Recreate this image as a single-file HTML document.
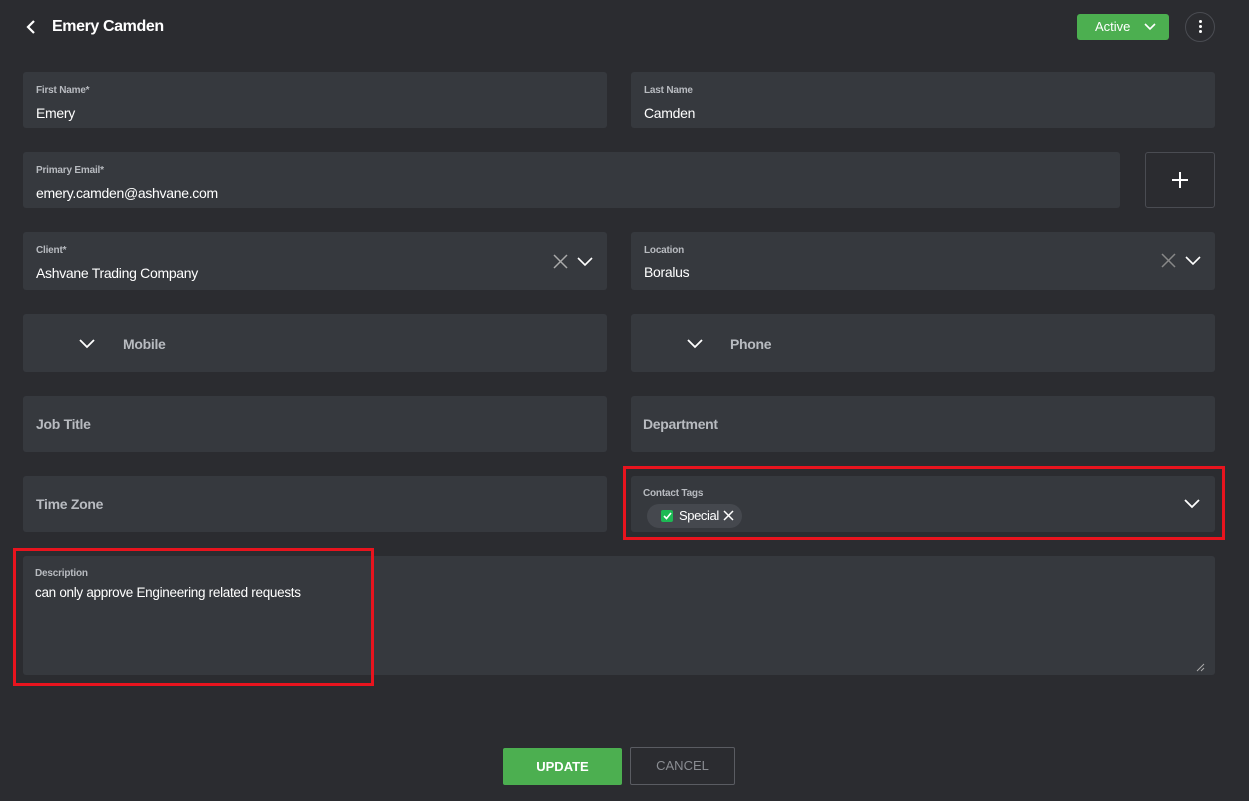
<!DOCTYPE html><html><head><style>
body{margin:0;width:1249px;height:801px;background:#2b2c30;font-family:"Liberation Sans",sans-serif;position:relative;overflow:hidden;color:#fff}
.f{position:absolute;background:#36393e;border-radius:3px}
.l{position:absolute;left:13px;top:13px;font-size:10px;color:#b8bbc0;font-weight:bold;letter-spacing:-0.2px}
.v{position:absolute;left:13px;top:33px;font-size:14px;color:#fff;letter-spacing:-0.3px}
.p{position:absolute;left:13px;font-size:14px;color:#b8bbc0;font-weight:bold;letter-spacing:-0.3px}
svg{position:absolute}
.red{position:absolute;border:3px solid #e8141e}
</style></head><body>
<svg style="left:24px;top:19px" width="14" height="16"><path d="M10 2 L4 8 L10 14" stroke="#fff" stroke-width="2.2" fill="none"/></svg>
<div style="position:absolute;left:52px;top:18px;font-size:16px;font-weight:bold;letter-spacing:-0.4px">Emery Camden</div>
<div style="position:absolute;left:1077px;top:14px;width:92px;height:26px;background:#4caf50;border-radius:3px;font-size:13px;line-height:26px"><span style="position:absolute;left:18px">Active</span><svg style="left:67px;top:9px" width="12" height="8"><path d="M1 1L6 6L11 1" stroke="#fff" stroke-width="1.6" fill="none"/></svg></div>
<div style="position:absolute;left:1185px;top:12px;width:28px;height:28px;border:1px solid #4a4c52;border-radius:50%"><div style="position:absolute;left:13px;top:7px;width:3px;height:3px;background:#fff;border-radius:2px;box-shadow:0 5px 0 #fff,0 10px 0 #fff"></div></div>

<div class="f" style="left:23px;top:72px;width:584px;height:56px"><div class="l">First Name*</div><div class="v">Emery</div></div>
<div class="f" style="left:631px;top:72px;width:584px;height:56px"><div class="l">Last Name</div><div class="v">Camden</div></div>
<div class="f" style="left:23px;top:152px;width:1097px;height:56px"><div class="l">Primary Email*</div><div class="v">emery.camden@ashvane.com</div></div>
<div style="position:absolute;left:1145px;top:152px;width:68px;height:54px;border:1px solid #4a4c52;border-radius:3px"><svg style="left:26px;top:19px" width="16" height="16"><path d="M8 0V16M0 8H16" stroke="#fff" stroke-width="2"/></svg></div>
<div class="f" style="left:23px;top:232px;width:584px;height:58px"><div class="l">Client*</div><div class="v">Ashvane Trading Company</div>
<svg style="left:530px;top:22px" width="48" height="16"><path d="M1 1L14 14M14 1L1 14" stroke="#aaa" stroke-width="1.5"/><path d="M25 4L32 11L39 4" stroke="#fff" stroke-width="1.6" fill="none"/></svg></div>
<div class="f" style="left:631px;top:232px;width:584px;height:58px"><div class="l">Location</div><div class="v" style="top:32px">Boralus</div>
<svg style="left:530px;top:21px" width="48" height="16"><path d="M1 1L14 14M14 1L1 14" stroke="#888" stroke-width="1.5"/><path d="M25 4L32 11L39 4" stroke="#fff" stroke-width="1.6" fill="none"/></svg></div>
<div class="f" style="left:23px;top:314px;width:584px;height:58px"><svg style="left:56px;top:24px" width="18" height="12"><path d="M1 2L8 9L15 2" stroke="#fff" stroke-width="1.8" fill="none"/></svg><div class="p" style="left:100px;top:22px">Mobile</div></div>
<div class="f" style="left:631px;top:314px;width:584px;height:58px"><svg style="left:56px;top:24px" width="18" height="12"><path d="M1 2L8 9L15 2" stroke="#fff" stroke-width="1.8" fill="none"/></svg><div class="p" style="left:99px;top:22px">Phone</div></div>
<div class="f" style="left:23px;top:396px;width:584px;height:56px"><div class="p" style="top:20px">Job Title</div></div>
<div class="f" style="left:631px;top:396px;width:584px;height:56px"><div class="p" style="left:12px;top:20px">Department</div></div>
<div class="f" style="left:23px;top:476px;width:584px;height:56px"><div class="p" style="top:20px">Time Zone</div></div>
<div class="f" style="left:631px;top:476px;width:584px;height:56px"><div class="l" style="left:12px;top:12px">Contact Tags</div>
<div style="position:absolute;left:16px;top:28px;width:95px;height:24px;background:#45484e;border-radius:12px"><div style="position:absolute;left:14px;top:6px;width:12px;height:12px;background:#1db954;border-radius:2px"></div><svg style="left:15px;top:7px" width="11" height="10"><path d="M2 5L4.5 7.5L9 2" stroke="#fff" stroke-width="1.6" fill="none"/></svg><div style="position:absolute;left:32px;top:4px;font-size:13px;letter-spacing:-0.4px">Special</div><svg style="left:76px;top:6px" width="11" height="11"><path d="M1 1L10 10M10 1L1 10" stroke="#fff" stroke-width="1.5"/></svg></div>
<svg style="left:553px;top:22px" width="18" height="12"><path d="M1 2L8 9L15 2" stroke="#fff" stroke-width="1.8" fill="none"/></svg></div>
<div class="red" style="left:623px;top:466px;width:596px;height:68px"></div>
<div class="f" style="left:23px;top:556px;width:1192px;height:119px"><div class="l" style="left:12px;top:12px">Description</div><div class="v" style="left:12px;top:29px;font-size:13.5px">can only approve Engineering related requests</div>
<svg style="left:1172px;top:106px" width="10" height="10"><path d="M9 2L2 9M9 6L6 9" stroke="#aaa" stroke-width="1"/></svg></div>
<div class="red" style="left:13px;top:548px;width:355px;height:132px"></div>
<div style="position:absolute;left:503px;top:748px;width:119px;height:37px;background:#4caf50;border-radius:2px;font-size:13px;font-weight:bold;line-height:37px;text-align:center">UPDATE</div>
<div style="position:absolute;left:630px;top:747px;width:103px;height:36px;border:1px solid #5a5c62;border-radius:2px;font-size:13px;color:#8a8d92;line-height:36px;text-align:center">CANCEL</div>
</body></html>
